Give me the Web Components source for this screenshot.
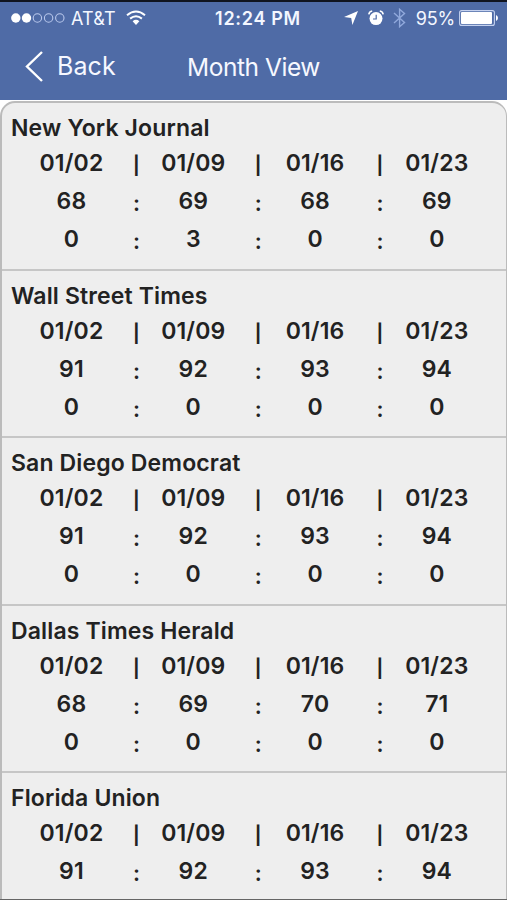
<!DOCTYPE html>
<html lang="en"><head><meta charset="utf-8"><title>Month View</title>
<style>html,body{margin:0;height:900px;overflow:hidden;background:#fff;font-family:Inter,"Liberation Sans",sans-serif}</style></head>
<body><month-app></month-app>
<script>
const define=(name,html)=>customElements.define(name,class extends HTMLElement{
  constructor(){super();this.attachShadow({mode:'open'}).innerHTML=typeof html==='function'?html(this):html;}
});
define('status-bar',`<style>
:host{display:grid;grid-template-columns:1fr auto 1fr;align-items:center;height:32px;padding:0 9px 0 11px;color:#f4f7ff;font-size:18px;box-sizing:border-box}
div{display:flex;align-items:center}svg{display:block;flex:none}
.c{margin-left:6px;letter-spacing:.2px}
.time{font-weight:600;font-size:18px;letter-spacing:.7px;white-space:nowrap;padding-left:7px}
.right{justify-content:flex-end}
</style>
<div><svg width="54" height="12" viewBox="0 0 54 12"><g fill="#fff"><circle cx="4.8" cy="6" r="4.7"/><circle cx="15.5" cy="6" r="4.7"/></g><g fill="none" stroke="#b9c8ec" stroke-width="1.1"><circle cx="26.4" cy="6" r="4.2"/><circle cx="37.6" cy="6" r="4.2"/><circle cx="48.8" cy="6" r="4.2"/></g></svg>
<span class="c">AT&amp;T</span>
<svg style="margin-left:10px" width="20" height="16" viewBox="0 0 20 16" fill="none" stroke="#fff" stroke-width="2"><path d="M1 5.3Q10-2.2 19 5.3M4.1 8.6Q10 3.8 15.9 8.6"/><path d="M6.6 11.2Q10 8.4 13.4 11.2L10 15z" fill="#fff" stroke="none"/></svg></div>
<div class="time">12:24 PM</div>
<div class="right">
<svg width="14" height="14" viewBox="0 0 14 14"><path d="M14 0L8.4 14L7.2 7L0 6.1Z" fill="#fff"/></svg>
<svg style="margin-left:10px" width="16" height="16" viewBox="0 0 16 16"><circle cx="8" cy="8.6" r="6.5" fill="#fff"/><path d="M.8 4.3Q1.3 1.5 4.2 1M15.2 4.3Q14.7 1.5 11.8 1" stroke="#fff" stroke-width="1.6" fill="none"/><path d="M8.2 4.7V9H5" stroke="#4f6ba6" stroke-width="1.2" fill="none"/></svg>
<svg style="margin-left:9px" width="13" height="20" viewBox="0 0 13 20"><path d="M1 5L11.5 14.6L6.6 18.7V1.3L11.5 5.4L1 15" fill="none" stroke="#91a9dc" stroke-width="1.4"/></svg>
<span style="margin-left:10px;letter-spacing:-.2px">95%</span>
<svg style="margin-left:4px" width="39" height="16" viewBox="0 0 39 16"><rect x=".6" y=".6" width="34.8" height="14.8" rx="2" fill="none" stroke="#c4d1ef" stroke-width="1.1"/><rect x="2" y="2" width="31" height="12" rx="1" fill="#fff"/><path d="M37 5Q39 6 39 8T37 11z" fill="#fff"/></svg></div>`);
define('nav-bar',`<style>
:host{display:grid;grid-template-columns:1fr auto 1fr;align-items:center;height:64px;color:#f6f8ff;font-size:25px;line-height:30px;letter-spacing:.1px}
::slotted(.title){letter-spacing:-.45px;font-size:24.5px;padding-top:1px}
.back{display:flex;align-items:center;padding-left:25px}svg{margin-right:14px}
</style><div class="back"><svg width="18" height="31" viewBox="0 0 18 31"><path d="M17 1L2 15.5L17 30" fill="none" stroke="#fff" stroke-width="2.4"/></svg><span><slot name="back"></slot></span></div><slot></slot><div></div>`);
define('data-row',el=>{const c=el.getAttribute('values').split(','),s=el.getAttribute('sep');return `<style>
:host{display:grid;grid-template-columns:97.4px 24.4px 97.4px 24.4px 97.4px 24.4px 97.4px;height:38px;line-height:38px;padding-left:20.8px;text-align:center}
i{font-style:normal;padding:2px 0 0 8px;font-size:22px;line-height:38px;height:38px;box-sizing:border-box}
i.bar{font-size:18px;line-height:40px;font-weight:650}span{letter-spacing:.15px}
</style>`+c.map(v=>`<span>${v}</span>`).join(`<i class="${s==='|'?'bar':''}">${s}</i>`)});
define('paper-card',el=>`<style>
:host{display:block;box-sizing:border-box;height:167.5px;padding-top:8px;border-bottom:2px solid #c6c6c6;font-size:23px;font-weight:560;color:#222;white-space:nowrap}
h2{margin:0 0 0 9px;font-size:23px;font-weight:560;line-height:34px;height:33px;letter-spacing:.14px}
</style><h2><slot></slot></h2><data-row sep="|" values="01/02,01/09,01/16,01/23"></data-row><data-row sep=":" values="${el.getAttribute('rates')}"></data-row><data-row sep=":" values="${el.getAttribute('counts')}"></data-row>`);
define('month-app',`<style>
:host{display:block;height:900px;overflow:hidden;box-sizing:border-box;border-bottom:1px solid #656565}
header{background:#4f6ba6;border-top:2px solid #10141f;height:100px;box-sizing:border-box}
main{background:#eee;border:2px solid #bbb;border-right-width:1.5px;border-radius:15px 15px 0 0;margin-top:1px;box-sizing:border-box;height:860px}
</style><header><status-bar></status-bar><nav-bar><span slot="back">Back</span><span class="title">Month View</span></nav-bar></header>
<main><paper-card rates="68,69,68,69" counts="0,3,0,0">New York Journal</paper-card>
<paper-card rates="91,92,93,94" counts="0,0,0,0">Wall Street Times</paper-card>
<paper-card rates="91,92,93,94" counts="0,0,0,0">San Diego Democrat</paper-card>
<paper-card rates="68,69,70,71" counts="0,0,0,0">Dallas Times Herald</paper-card>
<paper-card rates="91,92,93,94" counts="0,0,0,0">Florida Union</paper-card></main>`);
</script></body></html>
